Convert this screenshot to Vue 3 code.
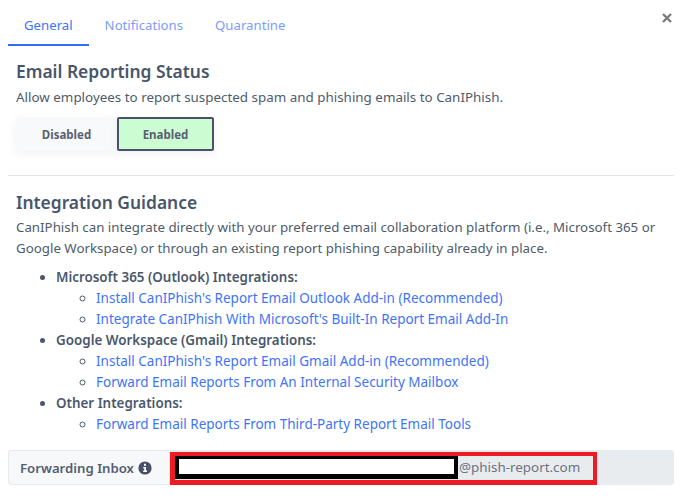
<template>
  <div class="modal">
    <button class="close" aria-label="Close">
      <svg width="10" height="10" viewBox="0 0 10 10"><path d="M1 1L9 9M9 1L1 9" stroke="#7b7b7b" stroke-width="2.4" fill="none"/></svg>
    </button>
    <nav class="tabs">
      <a v-for="(t, i) in tabs" :key="t" class="tab" :class="{ active: i === 0 }">{{ t }}</a>
    </nav>
    <section class="status">
      <h2>Email Reporting Status</h2>
      <p>Allow employees to report suspected spam and phishing emails to CanIPhish.</p>
      <div class="toggle">
        <button class="off">Disabled</button>
        <button class="on">Enabled</button>
      </div>
    </section>
    <hr />
    <section class="guide">
      <h2>Integration Guidance</h2>
      <p>CanIPhish can integrate directly with your preferred email collaboration platform (i.e., Microsoft 365 or Google Workspace) or through an existing report phishing capability already in place.</p>
      <ul class="outer">
        <li v-for="g in groups" :key="g.title">
          <strong>{{ g.title }}</strong>
          <ul class="inner">
            <li v-for="l in g.links" :key="l"><a>{{ l }}</a></li>
          </ul>
        </li>
      </ul>
    </section>
    <div class="inbox">
      <div class="label">
        <span>Forwarding Inbox</span>
        <svg width="14" height="14" viewBox="0 0 14 14"><circle cx="7" cy="7" r="6.6" fill="#4a5068"/><rect x="6" y="2.8" width="2" height="2" fill="#fff"/><path d="M5.2 6h2.8v3.6h1v1.3H5.2V9.6h1V7.3h-1z" fill="#fff"/></svg>
      </div>
      <div class="field">
        <div class="redact"></div>
        <span class="domain">@phish-report.com</span>
        <div class="red"></div>
      </div>
    </div>
  </div>
</template>

<script setup>
const tabs = ['General', 'Notifications', 'Quarantine']
const groups = [
  { title: 'Microsoft 365 (Outlook) Integrations:', links: ["Install CanIPhish's Report Email Outlook Add-in (Recommended)", "Integrate CanIPhish With Microsoft's Built-In Report Email Add-In"] },
  { title: 'Google Workspace (Gmail) Integrations:', links: ["Install CanIPhish's Report Email Gmail Add-in (Recommended)", 'Forward Email Reports From An Internal Security Mailbox'] },
  { title: 'Other Integrations:', links: ['Forward Email Reports From Third-Party Report Email Tools'] }
]
</script>

<style>
html, body { margin: 0; background: #fff; }
</style>

<style scoped>
.modal {
  position: relative;
  width: 682px;
  height: 500px;
  overflow: hidden;
  box-sizing: border-box;
  padding: 7px 8px 0;
  font-family: "Noto Sans", "Open Sans", sans-serif;
  font-size: 13.4px;
  color: #4f5b6b;
}
.close {
  position: absolute;
  top: 13px;
  right: 10px;
  padding: 0;
  border: 0;
  background: none;
  line-height: 0;
}
.tabs { display: flex; height: 39px; }
.tab {
  padding: 8px 16px 0;
  color: #7d9dfb;
  font-size: 13.2px;
  line-height: 20px;
  box-sizing: border-box;
}
.tab.active { color: #3e73f6; border-bottom: 2px solid #2f6bff; }
.status { padding: 13px 8px 0; }
h2 {
  margin: 0;
  font-size: 17.4px;
  font-weight: 600;
  line-height: 24px;
  color: #47566a;
}
p { margin: 4px 0 0; line-height: 21px; }
.toggle { display: flex; margin-top: 9px; }
.toggle button {
  height: 34px;
  font: 700 11.5px "Noto Sans", sans-serif;
  color: #5a6072;
  box-sizing: border-box;
  box-shadow: 0 3px 8px rgba(80, 90, 120, 0.08);
}
.off { width: 101px; background: #f8f9fb; border: 0; border-radius: 4px; }
.on { width: 97px; background: #ccfcd2; border: 2px solid #4a5068; border-radius: 2px; }
hr { border: 0; border-top: 1px solid #e4e6ea; margin: 24px 0 0; width: 666px; }
.guide { padding: 14px 0 0 8px; }
.guide p { margin-top: 3px; font-size: 13.3px; }
ul { margin: 0; padding: 0; }
.outer { margin-top: 8px; padding-left: 40px; }
.outer > li { line-height: 21px; color: #4a586b; }
.outer strong { font-weight: 600; }
.inner { padding-left: 40px; list-style: circle; font-size: 13.5px; }
.inner a { color: #3f74f8; }
.inbox {
  display: flex;
  width: 666px;
  height: 35px;
  margin-top: 15px;
}
.label {
  width: 162px;
  box-sizing: border-box;
  display: flex;
  align-items: center;
  gap: 4px;
  padding-left: 11px;
  background: #f7f8fa;
  border: 1px solid #e7eaee;
  border-radius: 3px 0 0 3px;
  font-weight: 600;
  font-size: 13.2px;
  color: #535d72;
}
.field {
  position: relative;
  flex: 1;
  background: #e9ecef;
  border-radius: 0 3px 3px 0;
}
.redact {
  position: absolute;
  left: 5px;
  top: 5px;
  width: 283px;
  height: 24px;
  box-sizing: border-box;
  background: #fff;
  border: 4px solid #000;
  border-bottom-width: 5px;
}
.domain {
  position: absolute;
  left: 289px;
  top: 7px;
  color: #6c7280;
  font-size: 13.4px;
  line-height: 20px;
}
.red {
  position: absolute;
  left: 0;
  top: 2px;
  width: 427px;
  height: 33px;
  box-sizing: border-box;
  border: 4px solid #ed1c24;
  border-left-width: 5px;
  border-bottom-width: 5px;
}
</style>
